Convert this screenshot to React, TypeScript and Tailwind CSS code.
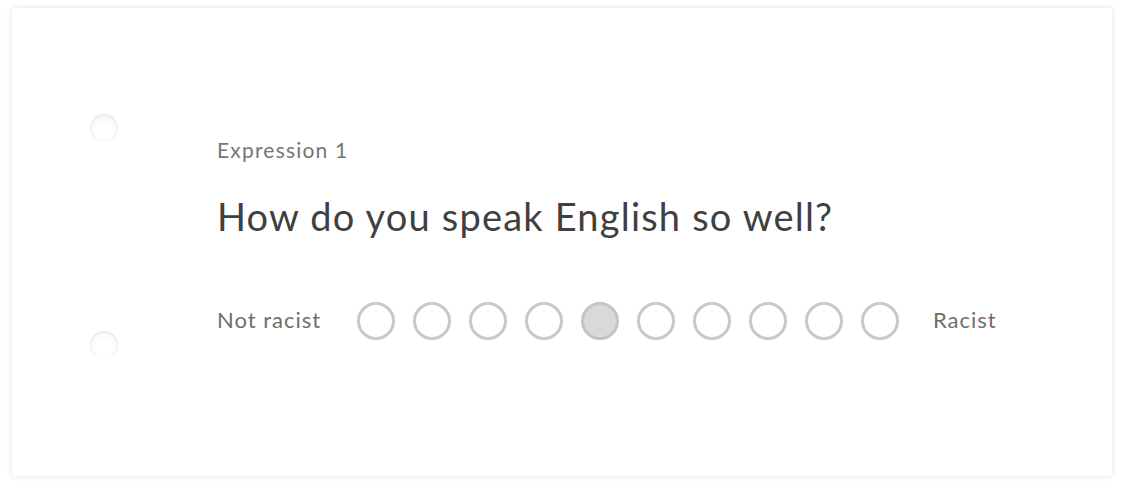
const options = [1, 2, 3, 4, 5, 6, 7, 8, 9, 10]

function Hole() {
  return (
    <div className="w-[28px] h-[28px] rounded-full bg-[radial-gradient(circle_at_50%_60%,#ffffff_30%,#f3f3f3_100%)] shadow-[inset_0_1px_3px_rgba(0,0,0,0.10)]" />
  )
}

export default function App() {
  const selected = 5
  return (
    <div className="w-[1124px] h-[492px] bg-white pt-[8px] pl-[12px] font-['Lato',sans-serif]">
      <div className="w-[1100px] h-[468px] bg-white rounded-[2px] shadow-[0_0_6px_rgba(0,0,0,0.12)] flex">
        <div className="w-[205px] flex flex-col items-start pt-[106px] pl-[78px] gap-[189px] shrink-0">
          <Hole />
          <Hole />
        </div>
        <div className="pt-[128px]">
          <div className="text-[21px] text-[#767676] leading-[28px] tracking-[1.2px]">Expression 1</div>
          <h1 className="mt-[30px] text-[38px] text-[#404040] leading-[44px] tracking-[1.2px]">
            How do you speak English so well?
          </h1>
          <div className="mt-[64px] flex items-center">
            <span className="text-[22px] text-[#6e6e6e] w-[140px] tracking-[1px] pb-[4px]">Not racist</span>
            <div className="flex gap-[18px]">
              {options.map((n) => (
                <button
                  key={n}
                  className={
                    n === selected
                      ? "w-[38px] h-[38px] rounded-full border-[3px] border-[#c4c4c4] bg-[#d9d9d9]"
                      : "w-[38px] h-[38px] rounded-full border-[3px] border-[#c9c9c9] bg-white"
                  }
                />
              ))}
            </div>
            <span className="ml-[34px] text-[22px] text-[#6e6e6e] tracking-[1px] pb-[4px]">Racist</span>
          </div>
        </div>
      </div>
    </div>
  )
}
